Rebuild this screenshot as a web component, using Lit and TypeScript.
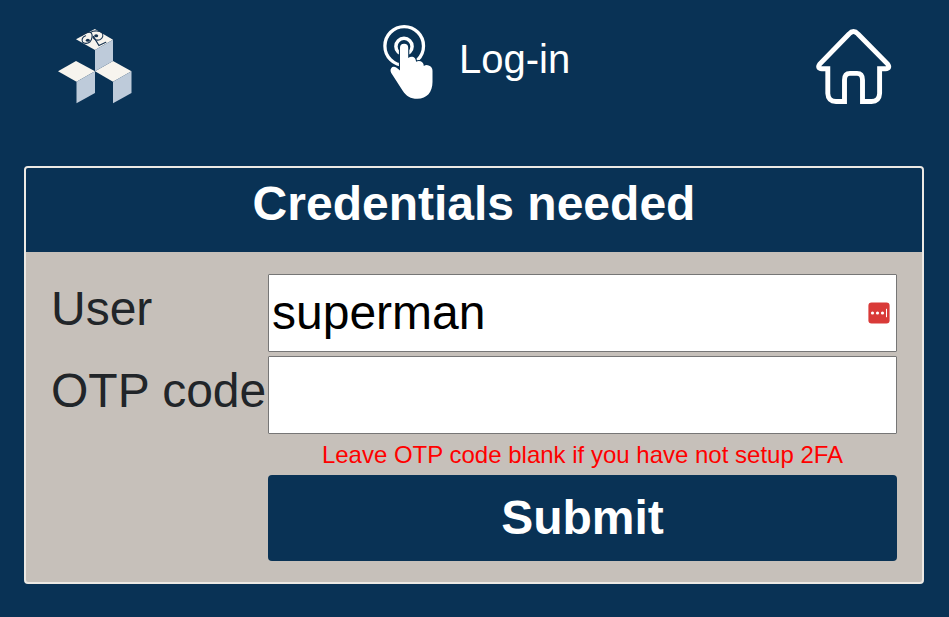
import { LitElement, html, css } from "lit";
import { customElement, state } from "lit/decorators.js";

@customElement("app-root")
export class AppRoot extends LitElement {
  static styles = css`
    :host {
      display: block;
      box-sizing: border-box;
      height: 617px;
      overflow: hidden;
      background: #093255;
      color: #fff;
      font-family: "Liberation Sans", Arial, sans-serif;
    }
    * { box-sizing: border-box; }
    svg { display: block; flex: none; }
    .bar {
      display: flex;
      align-items: flex-start;
      height: 166px;
      padding: 20px 55px 0;
    }
    .title { display: flex; gap: 24px; margin: 0 auto 0 246px; }
    .title span { font-size: 40px; line-height: 46px; margin-top: 16px; }
    .card {
      width: 900px;
      height: 418px;
      margin-left: 24px;
      border: 2px solid #ece9e4;
      border-radius: 4px;
      overflow: hidden;
      background: #c6c0ba;
    }
    h1 {
      margin: 0;
      height: 84px;
      background: #093255;
      font-size: 48px;
      line-height: 72px;
      text-align: center;
    }
    form {
      display: grid;
      grid-template-columns: 217px 629px;
      padding: 22px 0 0 25px;
    }
    label {
      color: #212529;
      font-size: 48px;
      line-height: 70px;
      white-space: nowrap;
    }
    .field { position: relative; height: 82px; }
    input {
      display: block;
      width: 100%;
      height: 78px;
      margin: 0;
      padding: 0 3px 2px;
      border: 1px solid #767676;
      border-radius: 1px;
      background: #fff;
      color: #000;
      font: 48px "Liberation Sans", Arial, sans-serif;
      outline: none;
    }
    .vault { position: absolute; right: 7px; top: 28px; }
    .note {
      grid-column: 2;
      height: 37px;
      color: #f00;
      font-size: 24px;
      line-height: 34px;
      text-align: center;
    }
    button {
      grid-column: 2;
      height: 86px;
      padding: 0 0 2px;
      border: 0;
      border-radius: 4px;
      background: #093255;
      color: #fff;
      font: bold 48px "Liberation Sans", Arial, sans-serif;
    }
  `;

  @state() private user = "superman";

  render() {
    return html`
      <header class="bar">
        <svg width="80" height="90" viewBox="55 20 80 90" aria-label="Cubes">
          <g fill="#f7f4ee">
            <path d="M76 39.3 94.8 29 113 39.7 95 50z" />
            <path d="M58 71.3 76 61 95 71.2 76.5 81.7z" />
            <path d="M95 71.2 113 61 131.5 71.3 113 81.7z" />
          </g>
          <g fill="#becbda">
            <path d="M95 50 113 39.7V61L95 71.2z" />
            <path d="M76.5 81.7 95 71.2V93L76.5 103.2z" />
            <path d="M113 81.7 131.5 71.3V93L113 103.2z" />
          </g>
          <g fill="none" stroke="#14304e" stroke-width="1.1" stroke-linecap="round" stroke-linejoin="round">
            <path d="M81.4 35.6C84 33 89.4 31.2 91.4 33c1.4 2.2.8 6.6-1.6 9-2 1.6-5.4 2-7.2.2-1.2-2.4-.4-5.4 3-6.4" />
            <path d="M90.4 32.4c3-2 9.4-2 11.6.2 2 2.6.6 5.8-2.2 7.2-3 1-6-.2-6.8-2.8" />
            <path d="M93.4 36.4 99 45.6l6.8-3.4" />
          </g>
          <g fill="#14304e">
            <ellipse cx="87.8" cy="40.2" rx="2" ry="1.5" />
            <ellipse cx="96.2" cy="35.8" rx="2" ry="1.5" />
          </g>
        </svg>
        <div class="title">
          <svg width="54" height="84" viewBox="381 20 54 84" aria-hidden="true">
            <circle cx="404.2" cy="45.9" r="19.3" fill="none" stroke="#fff" stroke-width="3.3" />
            <circle cx="404" cy="46.4" r="8.1" fill="none" stroke="#fff" stroke-width="3.5" />
            <path
              d="M400 70.5V47.8q0-4 4.1-4 4.1 0 4.1 4V58q2-1.5 4.3-1.2 3.1.7 3.6 4.9 2.2-1.1 4.5-.4 3 1 3.2 4.7 2.2-1.4 4.8-.6 3.9 1.2 3.9 5.3V82c0 10-5.5 16.8-15.2 16.8-6.9 0-10.9-2.7-14.6-8.1L391.1 72.8q-1.6-3.6 1.2-5.7 2.8-1.6 7.7 3.4z"
              fill="#fff" stroke="#093255" stroke-width="2.2" paint-order="stroke" stroke-linejoin="round" />
          </svg>
          <span>Log-in</span>
        </div>
        <svg width="80" height="90" viewBox="814 20 80 90" aria-label="Home">
          <path
            d="M827.8 68.7H822Q816.5 68.3 820 63.8L849 34Q853.5 28.9 858 34L887.4 63.8Q890.9 68.3 885.4 68.7H879.6V93.5Q879.2 101.4 871.5 101.5H862.5V80Q862.5 73.4 857 73.4H850Q844.5 73.4 844.5 80V101.5H836Q828.2 101.4 827.8 93.5Z"
            fill="none" stroke="#fff" stroke-width="4.9" />
        </svg>
      </header>
      <main class="card">
        <h1>Credentials needed</h1>
        <form @submit=${(e: Event) => e.preventDefault()}>
          <label for="user">User</label>
          <div class="field">
            <input id="user" .value=${this.user} autocomplete="off" spellcheck="false" />
            <svg class="vault" width="22" height="22" viewBox="0 0 22 22" aria-hidden="true">
              <rect x=".4" y=".6" width="21.2" height="20.8" rx="3.2" fill="#d93a38" />
              <g fill="#fff">
                <circle cx="4.5" cy="11" r="1.6" />
                <circle cx="9.5" cy="11" r="1.6" />
                <circle cx="14.5" cy="11" r="1.6" />
                <rect x="18" y="6.8" width="1" height="8.4" />
              </g>
            </svg>
          </div>
          <label for="otp">OTP code</label>
          <div class="field"><input id="otp" autocomplete="off" /></div>
          <div class="note">Leave OTP code blank if you have not setup 2FA</div>
          <button type="submit">Submit</button>
        </form>
      </main>
    `;
  }
}
